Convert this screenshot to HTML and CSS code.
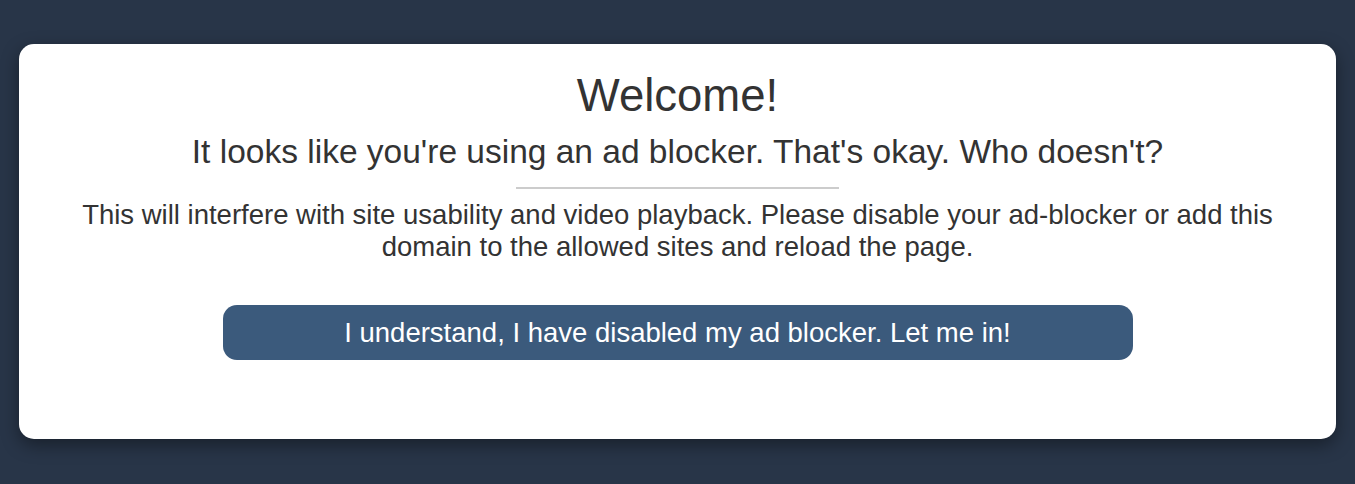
FILE: index.html
```html
<!DOCTYPE html>
<html lang="en">
<head>
  <meta charset="UTF-8" />
  <meta name="viewport" content="width=device-width, initial-scale=1.0" />
  <title>Ad blocker detected</title>
  <link rel="stylesheet" href="styles.css">
</head>
<body>
  <div class="modal">
    <h1>Welcome!</h1>
    <h2>It looks like you're using an ad blocker. That's okay. Who doesn't?</h2>
    <hr class="divider">
    <p>This will interfere with site usability and video playback. Please disable your ad-blocker or add this domain to the allowed sites and reload the page.</p>
    <button class="confirm">I understand, I have disabled my ad blocker. Let me in!</button>
  </div>
</body>
</html>
```

FILE: styles.css
```css
body {
  font-family: 'Liberation Sans', Arial, sans-serif;
  margin: 0;
  padding: 44px 19px;
  background: #283548;
  color: #333;
}
.modal {
  background: #fff;
  border-radius: 15px;
  box-shadow: 0 6px 18px rgba(0, 0, 0, 0.4);
  padding: 26px 40px 79px;
  display: flex;
  flex-direction: column;
  align-items: center;
  text-align: center;
}
h1 {
  font-size: 45.5px;
  font-weight: normal;
  margin: 0;
}
h2 {
  font-size: 33.5px;
  font-weight: normal;
  margin: 11px 0 0;
}
.divider {
  width: 323px;
  border: none;
  border-top: 2px solid #ccc;
  margin: 16px 0 0;
}
p {
  font-size: 27.5px;
  margin: 10px 0 0;
}
.confirm {
  width: 910px;
  height: 55px;
  margin-top: 42px;
  border: none;
  border-radius: 14px;
  background: #3b5a7c;
  color: #fff;
  font-family: inherit;
  font-size: 27.5px;
  cursor: pointer;
}
```
